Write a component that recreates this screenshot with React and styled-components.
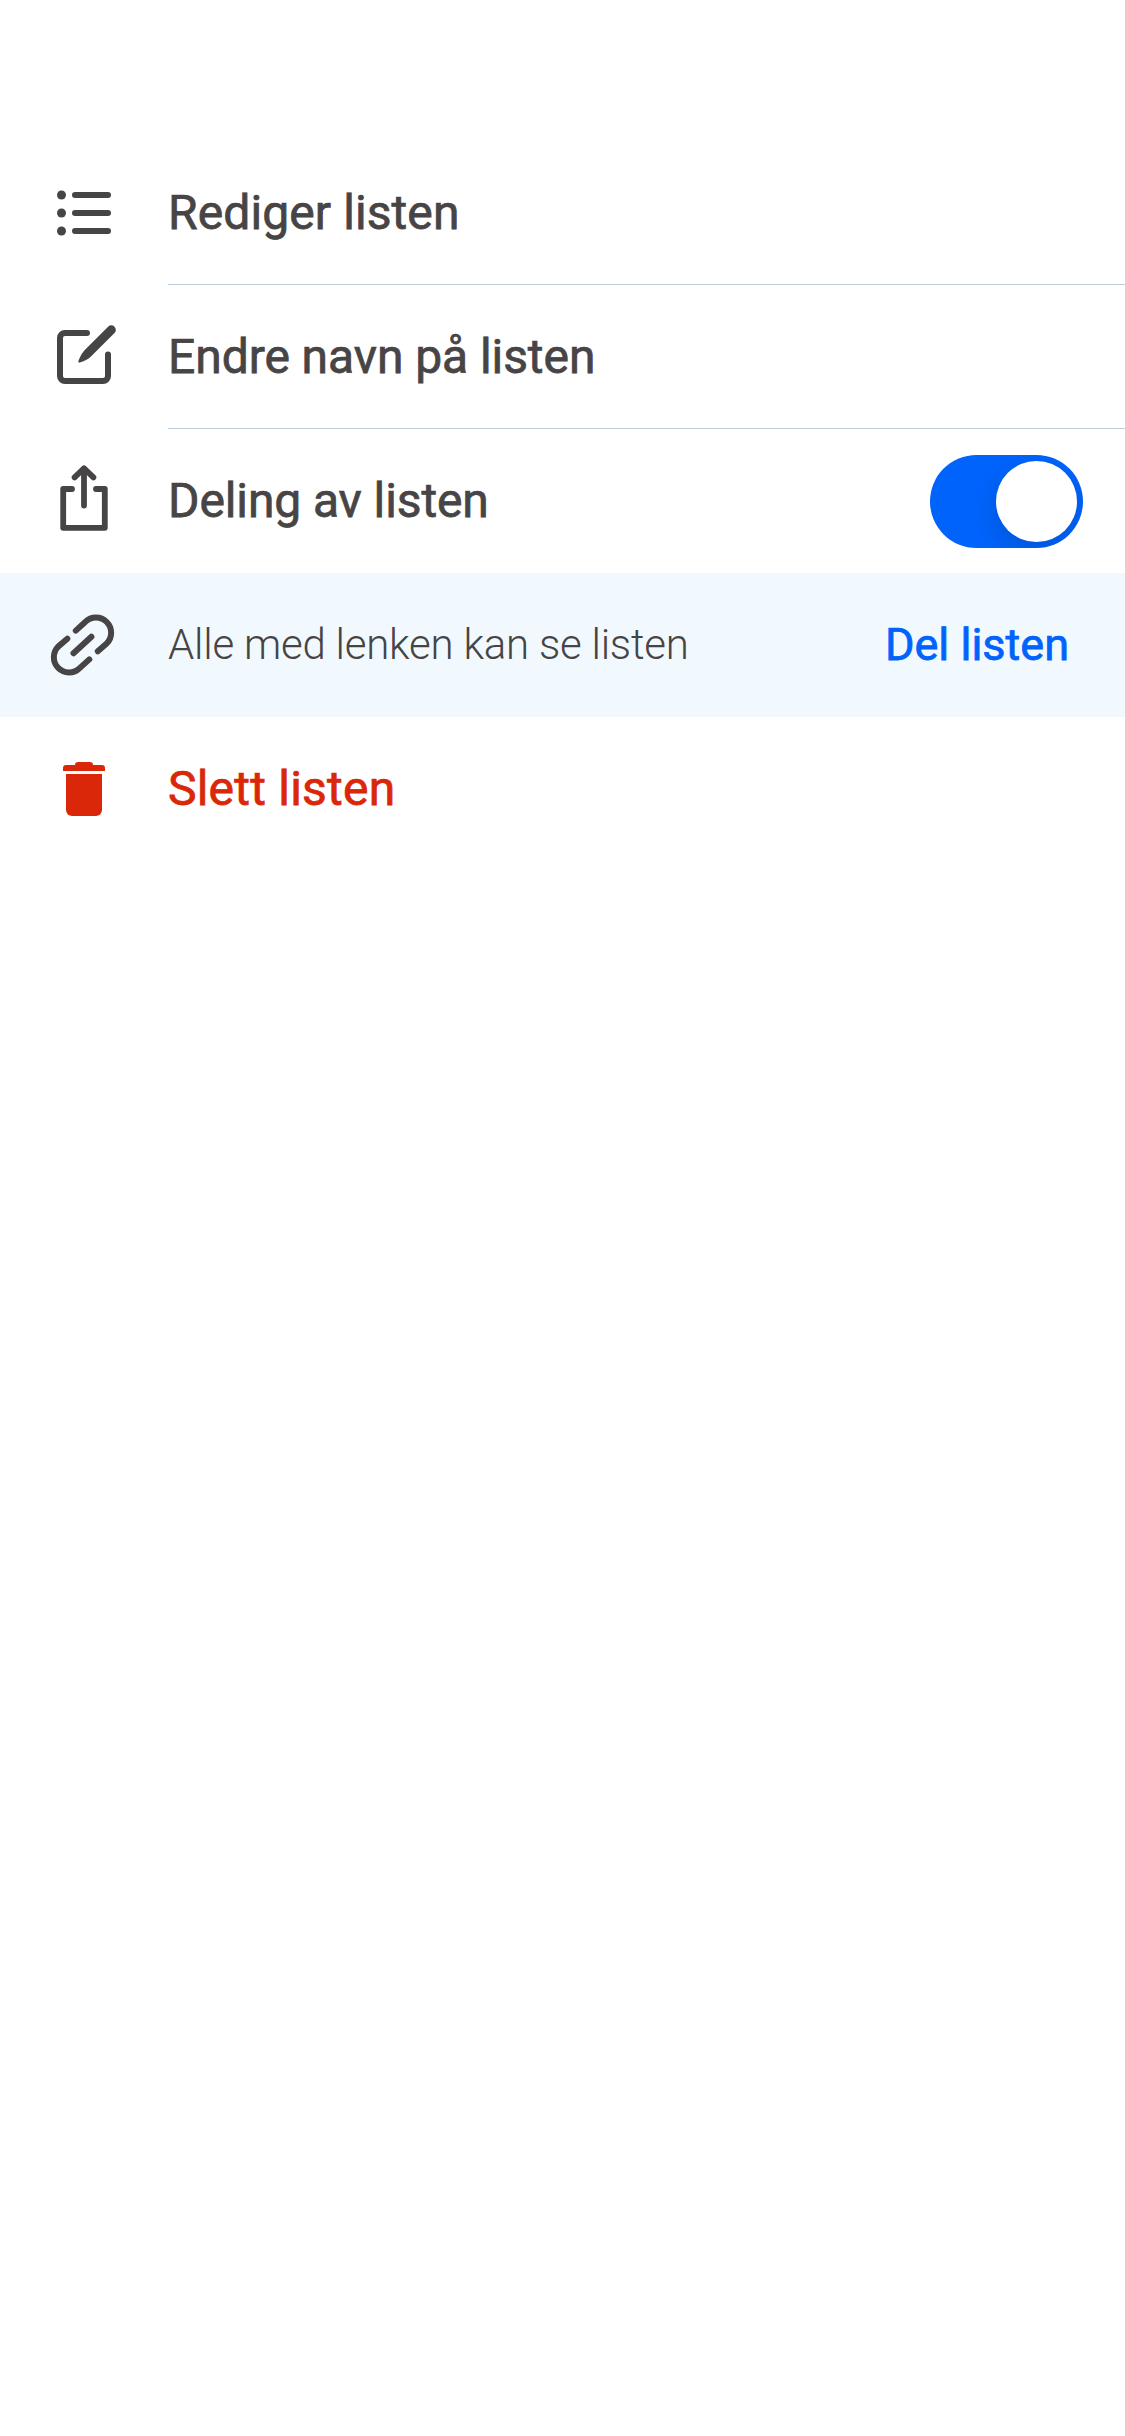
import React, { useState } from "react";
import styled, { createGlobalStyle } from "styled-components";

const Global = createGlobalStyle`
  body {
    margin: 0;
    background: #fff;
    font-family: Roboto, "Liberation Sans", sans-serif;
  }
`;

const Sheet = styled.main`
  box-sizing: border-box;
  width: 1125px;
  height: 2436px;
  padding-top: 141px;
  display: flex;
  flex-direction: column;
  background: #fff;
  overflow: hidden;
`;

const Row = styled.div`
  flex: none;
  height: 144px;
  display: grid;
  grid-template-columns: 168px 1fr;
  color: ${(p) => (p.$danger ? "#da2709" : "#474445")};
  background: ${(p) => (p.$highlight ? "#f1f9ff" : "transparent")};
`;

const IconCell = styled.div`
  display: flex;
  align-items: center;
  padding-left: 48px;
`;

const Icon = styled.svg`
  display: block;
  width: 72px;
  height: 72px;
  overflow: visible;
  fill: none;
  stroke: currentColor;
  stroke-width: ${(p) => p.$weight || 6};
  stroke-linecap: round;
  stroke-linejoin: round;
`;

const Content = styled.div`
  box-sizing: border-box;
  display: flex;
  align-items: center;
  justify-content: space-between;
  height: 144px;
  padding-right: ${(p) => p.$end || 0}px;
  border-bottom: ${(p) => (p.$divided ? "1px solid #bccbda" : "none")};
`;

const Label = styled.span`
  font-size: 48px;
  line-height: 72px;
  white-space: nowrap;
  letter-spacing: ${(p) => p.$tracking || 0}px;
  -webkit-text-stroke: 0.75px currentColor;
`;

const Hint = styled.span`
  font-size: 42px;
  font-weight: 300;
  line-height: 72px;
  white-space: nowrap;
  letter-spacing: -0.23px;
`;

const ShareButton = styled.button`
  border: 0;
  padding: 0;
  background: none;
  color: #0063fb;
  font-family: inherit;
  font-size: 45px;
  line-height: 72px;
  white-space: nowrap;
  -webkit-text-stroke: 0.75px currentColor;
`;

const Toggle = styled.button`
  box-sizing: border-box;
  width: 153px;
  height: 93px;
  padding: 6px;
  border: 0;
  border-radius: 47px;
  display: flex;
  justify-content: ${(p) => (p.$on ? "flex-end" : "flex-start")};
  background: ${(p) => (p.$on ? "#0063fb" : "#c3ccd9")};
  overflow: hidden;
`;

const Knob = styled.span`
  width: 81px;
  height: 81px;
  border-radius: 50%;
  background: #fff;
  box-shadow: 0 9px 24px rgba(0, 0, 0, 0.14);
`;

const ListIcon = () => (
  <Icon viewBox="0 0 72 72">
    {[18, 36, 54].map((y) => (
      <g key={y}>
        <circle cx="13.5" cy={y} r="4.5" fill="currentColor" stroke="none" />
        <path d={`M27 ${y}H60`} />
      </g>
    ))}
  </Icon>
);

const EditIcon = () => (
  <Icon viewBox="0 0 72 72">
    <path d="M39 12H17A5 5 0 0 0 12 17V55A5 5 0 0 0 17 60H55A5 5 0 0 0 60 55V33.5" />
    <path
      d="M60.1 5.7A4.5 4.5 0 0 1 66.5 12.1L43.2 35.2C40.5 37.9 37.2 39.8 31.8 41.6A1.2 1.2 0 0 1 30.3 40.2C32.2 35 34.2 31.6 36.8 28.9Z"
      fill="currentColor"
      stroke="none"
    />
  </Icon>
);

const ShareIcon = () => (
  <Icon viewBox="0 0 72 72" $weight={5.8}>
    <path d="M24 24H15.2V62.8H56.8V24H48" />
    <path d="M36 40.5V3.5M26.6 12.4L36 3.2L45.4 12.4" />
  </Icon>
);

const LinkIcon = () => (
  <Icon viewBox="0 0 72 72">
    <path d="M25.5 44.3L43.4 27.7" />
    <path d="M27.8 21.6L37.2 13A15.2 15.2 0 0 1 58.7 34.5L49.8 42.3" />
    <path d="M19.3 29.8L10.4 37.4A15.2 15.2 0 0 0 31.7 59.1L41.3 50.4" />
  </Icon>
);

const TrashIcon = () => (
  <Icon viewBox="0 0 72 72">
    <g fill="currentColor" stroke="none">
      <path d="M15 18V15Q15 12 18 12H27Q27 9 30 9H42Q45 9 45 12H54Q57 12 57 15V18Z" />
      <path d="M18 21H54V57A6 6 0 0 1 48 63H24A6 6 0 0 1 18 57Z" />
    </g>
  </Icon>
);

function MenuRow({ icon, children, end, divided, highlight, danger }) {
  return (
    <Row $highlight={highlight} $danger={danger}>
      <IconCell>{icon}</IconCell>
      <Content $end={end} $divided={divided}>
        {children}
      </Content>
    </Row>
  );
}

export default function App() {
  const [shared, setShared] = useState(true);
  return (
    <>
      <Global />
      <Sheet>
        <MenuRow icon={<ListIcon />} divided>
          <Label $tracking={0.1}>Rediger listen</Label>
        </MenuRow>
        <MenuRow icon={<EditIcon />} divided>
          <Label $tracking={-0.07}>Endre navn på listen</Label>
        </MenuRow>
        <MenuRow icon={<ShareIcon />} end={42}>
          <Label $tracking={-0.1}>Deling av listen</Label>
          <Toggle $on={shared} role="switch" aria-checked={shared} onClick={() => setShared(!shared)}>
            <Knob />
          </Toggle>
        </MenuRow>
        <MenuRow icon={<LinkIcon />} end={56} highlight>
          <Hint>Alle med lenken kan se listen</Hint>
          <ShareButton>Del listen</ShareButton>
        </MenuRow>
        <MenuRow icon={<TrashIcon />} danger>
          <Label $tracking={0.22}>Slett listen</Label>
        </MenuRow>
      </Sheet>
    </>
  );
}
